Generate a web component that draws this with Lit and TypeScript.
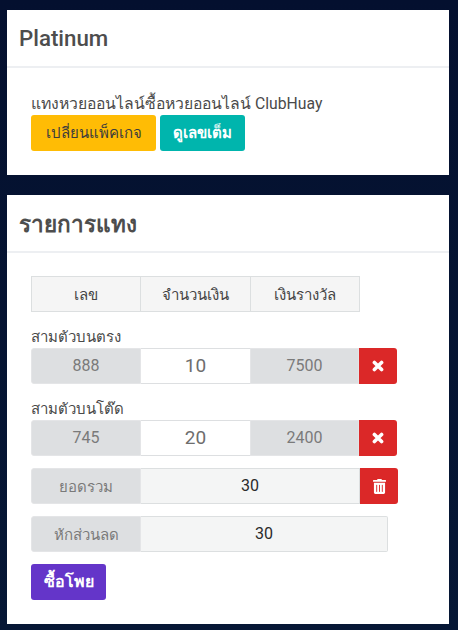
import { LitElement, html, css } from "lit";
import { customElement } from "lit/decorators.js";

const xIcon = html`<svg class="ico" viewBox="0 0 12 12" width="12" height="12"><path fill="none" stroke="currentColor" stroke-width="3.6" stroke-linecap="round" d="M2.4 2.4l7.2 7.2M9.6 2.4l-7.2 7.2"/></svg>`;
const trashIcon = html`<svg class="ico" viewBox="0 0 448 512" width="13" height="15"><path fill="currentColor" d="M32 464a48 48 0 0 0 48 48h288a48 48 0 0 0 48-48V128H32zm272-256a16 16 0 0 1 32 0v224a16 16 0 0 1-32 0zm-96 0a16 16 0 0 1 32 0v224a16 16 0 0 1-32 0zm-96 0a16 16 0 0 1 32 0v224a16 16 0 0 1-32 0zM432 32H312l-9.4-18.7A24 24 0 0 0 281.1 0H166.8a23.72 23.72 0 0 0-21.4 13.3L136 32H16A16 16 0 0 0 0 48v32a16 16 0 0 0 16 16h416a16 16 0 0 0 16-16V48a16 16 0 0 0-16-16z"/></svg>`;

@customElement("app-root")
export class AppRoot extends LitElement {
  static styles = css`
    :host {
      display: block;
      width: 458px;
      height: 630px;
      overflow: hidden;
      box-sizing: border-box;
      padding: 10px 9px 0 7px;
      background: linear-gradient(#04102f, #061735);
      font-family: Roboto, "Noto Sans", sans-serif;
      font-size: 15px;
      line-height: 18px;
      color: #4a4a4a;
    }
    .card { background: #fff; margin-bottom: 20px; }
    .card.second { height: 429px; }
    .card.first { height: 165px; }
    .head {
      height: 58px;
      box-sizing: border-box;
      border-bottom: 2px solid #edeff2;
      padding-left: 12px;
      display: flex;
      align-items: center;
      font-size: 22.3px;
      font-weight: 500;
      color: #4d4d4d;
    }
    .head.thai { font-weight: 700; font-size: 22.5px; padding-top: 2px; }
    .body { padding: 25px 24px 0; }
    .intro { height: 22px; line-height: 22px; font-size: 15.75px; }
    .btns { display: flex; gap: 4px; }
    .btn {
      height: 36px;
      border-radius: 3px;
      display: flex;
      align-items: center;
      justify-content: center;
      box-sizing: border-box;
    }
    .yellow { width: 125px; background: #ffbc05; color: #3d3d3d; }
    .teal { width: 85px; background: #00b5ad; color: #fff; font-weight: 700; }
    .purple { width: 75px; background: #6435c9; color: #fff; font-weight: 700; margin-top: 12px; font-size: 16px; }
    .tbl { display: grid; grid-template-columns: 110px 110px 109px; width: 329px; height: 36px; margin-top: -2px; }
    .tbl div {
      background: #f5f5f5;
      border: 1px solid #dcdfe0;
      margin-left: -1px;
      display: flex;
      align-items: center;
      justify-content: center;
      color: #444;
      padding-top: 1px;
      box-sizing: border-box;
    }
    .tbl div:first-child { margin-left: 0; }
    .label { height: 18px; margin-top: 16px; margin-bottom: 2px; line-height: 18px; }
    .row { display: flex; height: 36px; }
    .row.gap { margin-top: 12px; }
    .cell {
      width: 109px;
      box-sizing: border-box;
      display: flex;
      align-items: center;
      justify-content: center;
      background: #dddfe1;
      border: 1px solid #e4e5e7;
      color: #7a7a7a;
      font-size: 16px;
    }
    .cell.start { width: 110px; border-radius: 3px 0 0 3px; }
    .input { background: #fff; border-color: #dddfe1; border-width: 1px 0; font-size: 19px; color: #6e6e6e; }
    .value { background: #f4f5f5; border-color: #dcdfe0; border-left: 0; color: #2a2a2a; font-size: 16px; font-weight: 400; }
    .total { width: 219px; }
    .discount { width: 247px; border-radius: 0 2px 2px 0; }
    .del {
      width: 38px;
      background: #db2828;
      color: #fff;
      border-radius: 0 3px 3px 0;
      display: flex;
      align-items: center;
      justify-content: center;
    }
    .ico { display: block; }
    .cell.t { font-size: 15px; padding-top: 2px; }
  `;

  render() {
    return html`
      <section class="card first">
        <div class="head">Platinum</div>
        <div class="body">
          <div class="intro">แทงหวยออนไลน์ซื้อหวยออนไลน์ ClubHuay</div>
          <div class="btns">
            <div class="btn yellow">เปลี่ยนแพ็คเกจ</div>
            <div class="btn teal">ดูเลขเต็ม</div>
          </div>
        </div>
      </section>
      <section class="card second">
        <div class="head thai">รายการแทง</div>
        <div class="body">
          <div class="tbl"><div>เลข</div><div>จำนวนเงิน</div><div>เงินรางวัล</div></div>
          <div class="label">สามตัวบนตรง</div>
          <div class="row">
            <div class="cell start">888</div>
            <div class="cell input">10</div>
            <div class="cell">7500</div>
            <div class="del">${xIcon}</div>
          </div>
          <div class="label">สามตัวบนโต๊ด</div>
          <div class="row">
            <div class="cell start">745</div>
            <div class="cell input">20</div>
            <div class="cell">2400</div>
            <div class="del">${xIcon}</div>
          </div>
          <div class="row gap">
            <div class="cell start t">ยอดรวม</div>
            <div class="cell value total">30</div>
            <div class="del">${trashIcon}</div>
          </div>
          <div class="row gap">
            <div class="cell start t">หักส่วนลด</div>
            <div class="cell value discount">30</div>
          </div>
          <div class="btn purple">ซื้อโพย</div>
        </div>
      </section>
    `;
  }
}
